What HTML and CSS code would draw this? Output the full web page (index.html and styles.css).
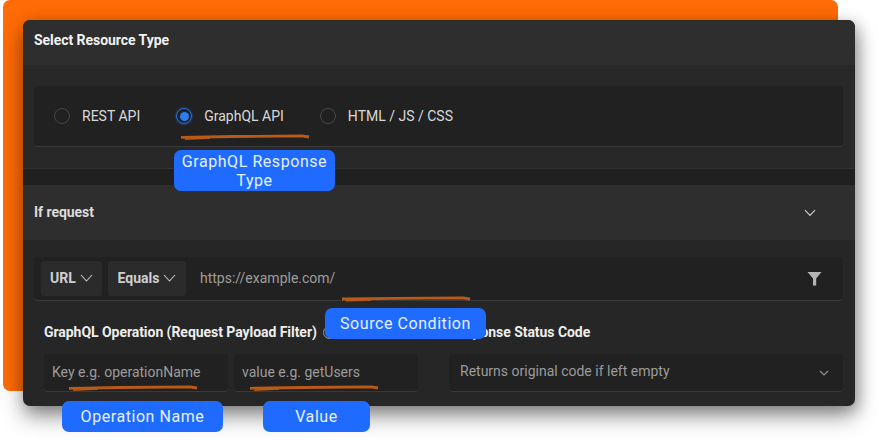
FILE: index.html
```html
<!DOCTYPE html>
<html lang="en">
<head>
<meta charset="utf-8">
<title>Select Resource Type</title>
<link rel="stylesheet" href="styles.css">
</head>
<body>
<div class="stage">
  <div class="backdrop"></div>
  <main class="card">
    <header class="head head-top">Select Resource Type</header>
    <section class="resource">
      <div class="radio-box">
        <label class="radio"><span class="dot"></span>REST API</label>
        <label class="radio"><span class="dot on"></span>GraphQL API</label>
        <label class="radio"><span class="dot"></span>HTML / JS / CSS</label>
      </div>
    </section>
    <div class="strip"></div>
    <header class="head head-if">
      <span>If request</span>
      <svg class="chev-if" width="12" height="8" viewBox="0 0 12 8"><path d="M1 1.200 6 6.400l5-5.200" fill="none" stroke="#d0d0d0" stroke-width="1.100"/></svg>
    </header>
    <section class="body">
      <div class="url-row">
        <button class="pick pick-url">URL<svg width="13" height="8" viewBox="0 0 13 8"><path d="M1 1 6.500 7 12 1" fill="none" stroke="#c4c4c4" stroke-width="1.100"/></svg></button>
        <button class="pick pick-eq">Equals<svg width="13" height="8" viewBox="0 0 13 8"><path d="M1 1 6.500 7 12 1" fill="none" stroke="#c4c4c4" stroke-width="1.100"/></svg></button>
        <span class="url-text">https://example.com/</span>
        <svg class="filter" width="15" height="15" viewBox="0 0 15 15"><path d="M.5 1h14L9.200 7.400V14.500H6V7.400z" fill="#b4b4b4"/></svg>
      </div>
      <div class="form-grid">
        <div class="col-left">
          <div class="label">GraphQL Operation (Request Payload Filter)<span class="info"></span></div>
          <div class="inputs">
            <div class="field field-kv">Key e.g. operationName</div>
            <div class="field field-kv">value e.g. getUsers</div>
          </div>
        </div>
        <div class="col-right">
          <div class="label">Response Status Code</div>
          <div class="field field-select">Returns original code if left empty
            <svg width="10" height="6" viewBox="0 0 10 6"><path d="M1 1 5 5 9 1" fill="none" stroke="#8c8c8c" stroke-width="1.200"/></svg>
          </div>
        </div>
      </div>
    </section>
  </main>

  <svg class="stroke s-graphql" width="130" height="8" viewBox="0 0 130 8"><path class="brush" d="M1 4.300C40 3.700 85 3 122 2.800L129 4"/><path class="brush-tail" d="M5 6.300 30 5"/></svg>
  <svg class="stroke s-source" width="130" height="8" viewBox="0 0 130 8"><path class="brush" d="M1 4C40 3.700 85 3 122 2.800L129 4"/><path class="brush-tail" d="M5 5.800 30 5"/></svg>
  <svg class="stroke s-key" width="130" height="8" viewBox="0 0 130 8"><path class="brush" d="M1 4.300C40 3.700 85 3 122 2.800L129 4"/><path class="brush-tail" d="M5 6.300 30 5"/></svg>
  <svg class="stroke s-value" width="130" height="8" viewBox="0 0 130 8"><path class="brush" d="M1 4.300C40 3.700 85 3 122 2.800L129 4"/><path class="brush-tail" d="M5 6.300 30 5"/></svg>

  <div class="tip t-graphql">GraphQL Response Type</div>
  <div class="tip t-source">Source Condition</div>
  <div class="tip t-key">Operation Name</div>
  <div class="tip t-value">Value</div>
</div>
</body>
</html>
```

FILE: styles.css
```css
* { box-sizing: border-box; }
html, body { margin: 0; padding: 0; background: #fff; }
body { font-family: Roboto, "Liberation Sans", sans-serif; overflow: hidden; }

.stage { position: relative; width: 878px; height: 443px; padding: 20px 23px 0; overflow: hidden; }
.backdrop { position: absolute; left: 3px; top: 0; width: 835px; height: 391px; background: #ff6b05; border-radius: 7px; }

.card {
  position: relative;
  width: 832px;
  height: 386px;
  background: #262626;
  border-radius: 7px;
  overflow: hidden;
  box-shadow: 0 10px 22px rgba(0, 0, 0, .42), 4px 4px 14px rgba(0, 0, 0, .2);
}

.head { display: flex; align-items: center; background: #2e2e2e; color: #e8e8e8; font-size: 14px; font-weight: 700; letter-spacing: -.05px; padding-left: 11px; }
.head-top { height: 45px; padding-bottom: 6px; color: #f2f2f2; }
.head-if { height: 55px; padding-bottom: 2px; justify-content: space-between; padding-right: 39px; color: #dcdcdc; }
.chev-if { margin-top: 2px; }

.resource { height: 104px; padding: 21px 12px 0 11px; background: #282828; border-bottom: 1px solid #323232; }
.radio-box { display: flex; align-items: center; gap: 36px; height: 61px; padding: 0 20px; background: #212121; border-radius: 4px; border-bottom: 1px solid #3a3a3a; }
.radio { display: flex; align-items: center; gap: 12px; color: #dadada; font-size: 14px; }
.dot { width: 16px; height: 16px; border-radius: 50%; border: 1px solid #474747; position: relative; }
.dot.on { border: 1.500px solid #2a6fe0; box-shadow: 0 0 3px rgba(42, 111, 224, .7); }
.dot.on::after { content: ""; position: absolute; inset: 2.500px; border-radius: 50%; background: #2b7bf5; }

.strip { height: 16px; background: #202020; }

.body { padding: 17px 12px 0 11px; }
.url-row { display: flex; align-items: center; height: 44px; padding: 0 21px 1px 7px; background: #212121; border-radius: 4px; border-bottom: 1px solid #3c3c3c; }
.pick { display: flex; align-items: center; justify-content: center; gap: 4px; height: 35px; margin-right: 6px; padding: 0; background: #2b2b2b; border: 0; border-radius: 3px; color: #cfcfcf; font: 700 14px Roboto, sans-serif; }
.pick-url { width: 61px; }
.pick-eq { width: 78px; margin-right: 14px; }
.url-text { flex: 1; color: #9e9e9e; font-size: 14px; }
.filter { display: block; }

.form-grid { display: flex; margin-top: 22px; }
.col-left { width: 374px; margin-left: 10px; margin-right: 31px; }
.col-right { width: 394px; }
.label { height: 31px; color: #eeeeee; font-size: 14px; font-weight: 700; letter-spacing: -.05px; display: flex; align-items: flex-start; padding-top: 1px; white-space: nowrap; }
.info { display: inline-block; width: 13px; height: 13px; border: 1px solid #9a9a9a; border-radius: 50%; margin: 2px 0 0 6px; }
.inputs { display: flex; gap: 6px; }
.field { height: 38px; background: #212121; border-radius: 4px; border-bottom: 1px solid #393939; color: #9c9c9c; font-size: 14px; display: flex; align-items: center; }
.field-kv { width: 184px; padding: 0 0 1px 8px; }
.field-select { justify-content: space-between; padding: 0 14px 4px 11px; }
.field-select svg { margin-top: 4px; }

.stroke { position: absolute; display: block; }
.brush { fill: none; stroke: #b95a18; stroke-width: 2.800; }
.brush-tail { fill: none; stroke: #b95a18; stroke-width: 1.600; }
.s-graphql { left: 180px; top: 133px; }
.s-source { left: 341px; top: 295px; }
.s-key { left: 68px; top: 384px; }
.s-value { left: 249px; top: 384px; }

.tip { position: absolute; display: flex; align-items: center; justify-content: center; text-align: center; background: #1f6bff; color: #e6f0ff; font-size: 16px; line-height: 19px; letter-spacing: .56px; border-radius: 7px; }
.t-graphql { left: 174px; top: 150px; width: 161px; height: 41px; }
.t-source { left: 325px; top: 308px; width: 161px; height: 31px; }
.t-key { left: 62px; top: 401px; width: 161px; height: 31px; }
.t-value { left: 263px; top: 401px; width: 107px; height: 31px; }
```
